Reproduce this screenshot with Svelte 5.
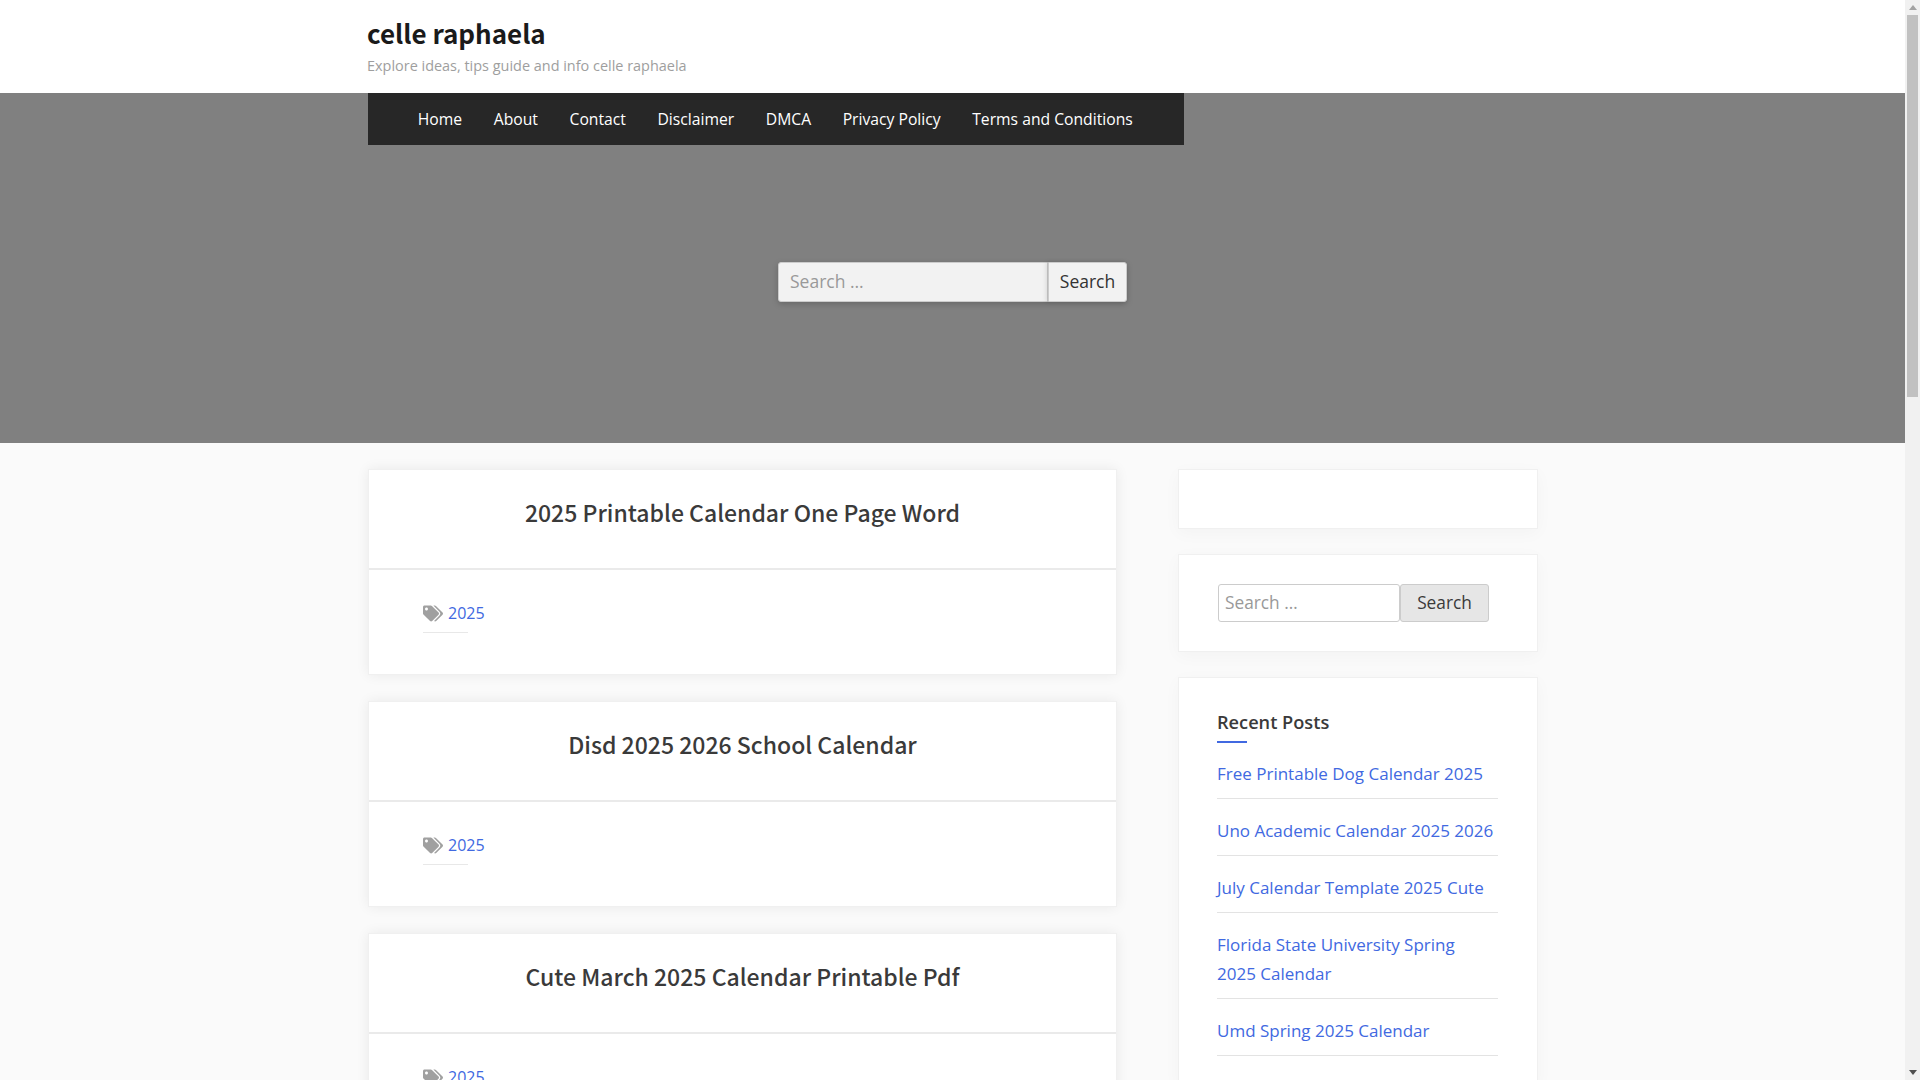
<script>
  const navItems = ['Home', 'About', 'Contact', 'Disclaimer', 'DMCA', 'Privacy Policy', 'Terms and Conditions'];
  const posts = ['2025 Printable Calendar One Page Word', 'Disd 2025 2026 School Calendar', 'Cute March 2025 Calendar Printable Pdf'];
  const recent = [
    'Free Printable Dog Calendar 2025',
    'Uno Academic Calendar 2025 2026',
    'July Calendar Template 2025 Cute',
    'Florida State University Spring 2025 Calendar',
    'Umd Spring 2025 Calendar'
  ];
</script>

<div class="page">
  <div class="site">
    <header class="brand">
      <h1>celle raphaela</h1>
      <p>Explore ideas, tips guide and info celle raphaela</p>
    </header>

    <section class="hero">
      <nav>
        {#each navItems as item}
          <a href="#top">{item}</a>
        {/each}
      </nav>
      <form class="hero-search">
        <input type="text" placeholder="Search …" />
        <button type="button">Search</button>
      </form>
    </section>

    <div class="content">
      <main>
        {#each posts as post}
          <article>
            <h2>{post}</h2>
            <div class="meta">
              <div class="tags">
                <svg class="tag-icon" viewBox="0 0 640 512" aria-hidden="true">
                  <path d="M497.941 225.941L286.059 14.059A48 48 0 0 0 252.118 0H48C21.49 0 0 21.49 0 48v204.118a48 48 0 0 0 14.059 33.941l211.882 211.882c18.744 18.745 49.136 18.746 67.882 0l204.118-204.118c18.745-18.745 18.745-49.137 0-67.882zM112 160c-26.51 0-48-21.49-48-48s21.49-48 48-48 48 21.49 48 48-21.49 48-48 48zm513.941 133.823L421.823 497.941c-18.745 18.745-49.137 18.745-67.882 0l-.36-.36L527.64 323.522c16.999-16.999 26.36-39.6 26.36-63.64s-9.362-46.641-26.36-63.64L331.397 0h48.721a48 48 0 0 1 33.941 14.059l211.882 211.882c18.745 18.745 18.745 49.137 0 67.882z" />
                </svg>
                <a href="#top">2025</a>
              </div>
            </div>
          </article>
        {/each}
      </main>

      <aside>
        <div class="widget empty"></div>
        <div class="widget search-widget">
          <form class="side-search">
            <input type="text" placeholder="Search …" />
            <button type="button">Search</button>
          </form>
        </div>
        <div class="widget recent">
          <h3>Recent Posts</h3>
          <ul>
            {#each recent as item}
              <li><a href="#top">{item}</a></li>
            {/each}
          </ul>
        </div>
      </aside>
    </div>
  </div>

  <div class="scrollbar">
    <span class="arrow up"></span>
    <div class="track"><div class="thumb"></div></div>
    <span class="arrow down"></span>
  </div>
</div>

<style>
  :global(body) {
    margin: 0;
    overflow: hidden;
    background: #fafafa;
  }

  .page {
    display: flex;
    height: 1080px;
    overflow: hidden;
    font-family: "Open Sans", sans-serif;
    color: #3a3a3a;
  }

  .site {
    flex: 1;
    min-width: 0;
  }

  .brand {
    height: 93px;
    box-sizing: border-box;
    padding: 13px 0 0 367px;
    background: #fff;
  }

  h1 {
    margin: 0;
    font: 700 26px/40px "Noto Sans CJK SC", sans-serif;
    color: #1a1a1a;
  }

  .brand p {
    margin: 3px 0 0;
    font-size: 14.45px;
    line-height: 20px;
    color: #9e9e9e;
  }

  .hero {
    height: 350px;
    background: #808080;
    padding-left: 368px;
    box-sizing: border-box;
  }

  nav {
    display: flex;
    width: 816px;
    height: 52px;
    box-sizing: border-box;
    padding-left: 34px;
    background: #272727;
    align-items: center;
  }

  nav a {
    padding: 0 15.8px;
    color: #fff;
    font-size: 15.7px;
    text-decoration: none;
  }

  .hero-search {
    display: flex;
    width: 349px;
    height: 40px;
    margin: 117px 0 0 410px;
    box-shadow: 0 2px 6px rgba(0, 0, 0, 0.2);
    border-radius: 3px;
  }

  .hero-search input {
    width: 270px;
    box-sizing: border-box;
    padding: 0 11px 2px;
    border: 1px solid #ccc;
    border-radius: 3px 0 0 3px;
    background: #f2f2f2;
    font: 500 17.5px "Open Sans", sans-serif;
  }

  .hero-search button {
    flex: 1;
    position: relative;
    padding: 0 0 2px;
    border: 1px solid #ccc;
    border-radius: 0 3px 3px 0;
    background: #f2f2f2;
    box-shadow: -2px 0 4px rgba(0, 0, 0, 0.1);
    color: #333;
    font: 500 17.5px "Open Sans", sans-serif;
  }

  input::placeholder {
    color: #999;
    opacity: 1;
  }

  .content {
    display: flex;
    padding: 26px 0 0 368px;
    gap: 61px;
    align-items: flex-start;
  }

  main {
    display: flex;
    flex-direction: column;
    gap: 26px;
    width: 749px;
  }

  article {
    background: #fff;
    height: 206px;
    box-sizing: border-box;
    border: 1px solid #f0f0f0;
    box-shadow: 0 0 12px rgba(0, 0, 0, 0.07);
    flex-shrink: 0;
  }

  h2 {
    margin: 0;
    height: 100px;
    box-sizing: border-box;
    padding-top: 24px;
    border-bottom: 2px solid #eaeaea;
    text-align: center;
    font: 500 23px/36px "Noto Sans CJK SC", sans-serif;
    color: #3a3a3a;
  }

  .meta {
    padding: 31px 0 0 54px;
  }

  .tags {
    display: flex;
    align-items: center;
    gap: 5px;
    width: 45px;
    height: 24px;
    padding-bottom: 7px;
    border-bottom: 1px solid #e8e8e8;
  }

  .tag-icon {
    flex-shrink: 0;
    width: 20px;
    height: 17px;
    fill: #a0a0a0;
  }

  .tags a {
    color: #4169e1;
    text-decoration: none;
    font-size: 16px;
    line-height: 24px;
  }

  aside {
    display: flex;
    flex-direction: column;
    gap: 25px;
    width: 360px;
  }

  .widget {
    background: #fff;
    border: 1px solid #f0f0f0;
    box-sizing: border-box;
    box-shadow: 0 4px 16px rgba(0, 0, 0, 0.03);
    padding: 29px 39px;
  }

  .empty {
    height: 60px;
    padding: 0;
  }

  .search-widget {
    height: 98px;
  }

  .side-search {
    display: flex;
    height: 38px;
  }

  .side-search input {
    width: 182px;
    box-sizing: border-box;
    padding: 0 6px 1px;
    border: 1px solid #ccc;
    border-radius: 3px;
    background: #fff;
    font: 17.3px "Open Sans", sans-serif;
  }

  .side-search button {
    width: 89px;
    padding: 0 0 1px;
    border: 1px solid #ccc;
    border-radius: 3px;
    background: #e6e6e6;
    color: #3a3a3a;
    font: 17.3px "Open Sans", sans-serif;
  }

  .recent {
    flex-shrink: 0;
    padding-left: 38px;
  }

  h3 {
    margin: 0;
    padding-bottom: 6px;
    position: relative;
    font: 600 18.2px/30px "Open Sans", sans-serif;
    color: #3a3a3a;
  }

  h3::after {
    content: "";
    position: absolute;
    left: 0;
    bottom: 0;
    width: 30px;
    height: 2px;
    background: #4169e1;
  }

  ul {
    list-style: none;
    margin: 0;
    padding: 0;
  }

  li {
    padding: 17px 0 10px;
    border-bottom: 1px solid #e3e3e3;
    font-size: 17px;
    line-height: 29px;
  }

  li:first-child {
    padding-top: 16px;
  }

  li a {
    color: #4169e1;
    text-decoration: none;
  }

  .scrollbar {
    width: 15px;
    flex-shrink: 0;
    display: flex;
    flex-direction: column;
    align-items: center;
    background: #f1f1f1;
  }

  .track {
    flex: 1;
    align-self: stretch;
    padding: 0 2px;
  }

  .thumb {
    height: 382px;
    background: #c1c1c1;
  }

  .arrow {
    flex-shrink: 0;
    width: 0;
    height: 0;
    margin: 5px 0;
    border-left: 4px solid transparent;
    border-right: 4px solid transparent;
  }

  .arrow.up {
    border-bottom: 5px solid #a3a3a3;
  }

  .arrow.down {
    border-top: 5px solid #505050;
  }
</style>
